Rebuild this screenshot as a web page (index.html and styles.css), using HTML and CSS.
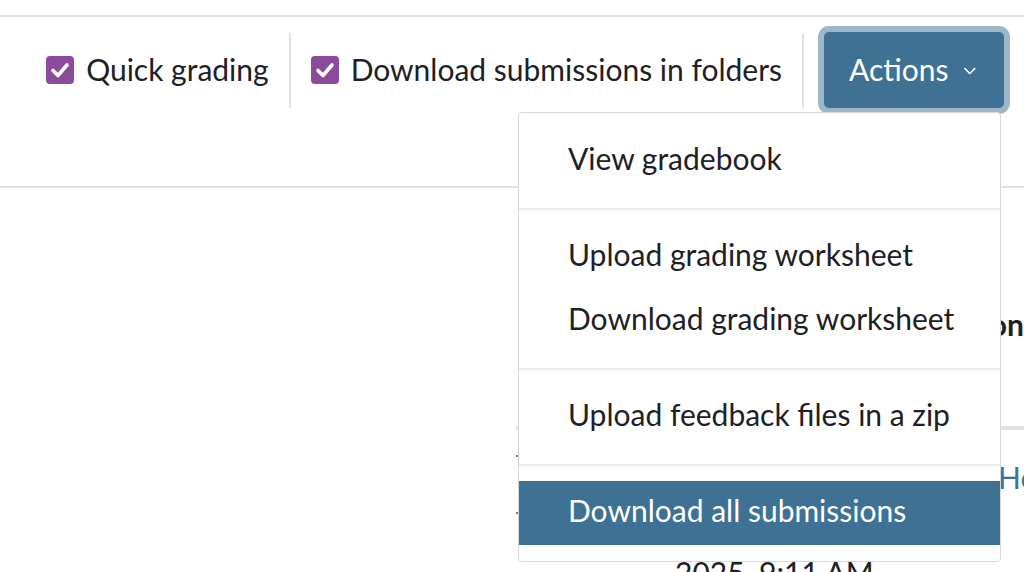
FILE: index.html
```html
<!DOCTYPE html>
<html lang="en">
<head>
<meta charset="utf-8">
<title>Submissions</title>
<link rel="stylesheet" href="styles.css">
</head>
<body>
<div class="page">
  <div class="topbar"></div>
  <div class="toolbar">
    <label class="check">
      <span class="box"><svg viewBox="0 0 28 28" width="28" height="28"><rect x="0" y="0" width="28" height="28" rx="4" fill="#8a4b9b"/><path d="M7 14.5 L12 19.5 L21 9" fill="none" stroke="#fff" stroke-width="3.6" stroke-linecap="round" stroke-linejoin="round"/></svg></span>
      <span class="lbl">Quick grading</span>
    </label>
    <span class="sep"></span>
    <label class="check">
      <span class="box"><svg viewBox="0 0 28 28" width="28" height="28"><rect x="0" y="0" width="28" height="28" rx="4" fill="#8a4b9b"/><path d="M7 14.5 L12 19.5 L21 9" fill="none" stroke="#fff" stroke-width="3.6" stroke-linecap="round" stroke-linejoin="round"/></svg></span>
      <span class="lbl">Download submissions in folders</span>
    </label>
    <span class="sep"></span>
    <div class="actions">
      <button class="btn" type="button"><span>Actions</span><svg class="chev" viewBox="0 0 14 8" width="14" height="8"><path d="M1 1 L7 7 L13 1" fill="none" stroke="#fff" stroke-width="2" stroke-linecap="round" stroke-linejoin="round"/></svg></button>
      <div class="menu">
        <a class="item">View gradebook</a>
        <div class="divider"></div>
        <a class="item">Upload grading worksheet</a>
        <a class="item">Download grading worksheet</a>
        <div class="divider"></div>
        <a class="item">Upload feedback files in a zip</a>
        <div class="divider"></div>
        <a class="item active">Download all submissions</a>
      </div>
    </div>
  </div>
  <div class="table">
    <div class="thead"><span class="th">Submission</span></div>
    <div class="tbody">
      <div class="marks"><span class="mark"></span><span class="mark mark2"></span></div>
      <div class="cells">
        <a class="link">Home</a>
        <div class="date">2025, 9:11 AM</div>
      </div>
    </div>
  </div>
</div>
</body>
</html>
```

FILE: styles.css
```css
html, body {
  margin: 0;
  padding: 0;
  background: #fff;
}
body {
  font-family: "Lato", "Noto Sans", sans-serif;
  font-size: 30px;
  color: #1d2125;
  overflow: hidden;
  width: 1024px;
  height: 572px;
}
.page {
  width: 1024px;
}
.topbar {
  height: 15px;
  border-bottom: 2px solid #dee2e6;
}
.toolbar {
  display: flex;
  justify-content: flex-end;
  align-items: center;
  gap: 20px;
  padding: 15px 20px 78px 0;
  border-bottom: 2px solid #dee2e6;
}
.check {
  display: flex;
  align-items: center;
  gap: 12px;
  white-space: nowrap;
}
.box {
  display: block;
  width: 28px;
  height: 28px;
}
.box svg {
  display: block;
}
.lbl {
  line-height: 36px;
  margin-top: -2px;
}
.sep {
  width: 2px;
  height: 75px;
  background: #dee2e6;
}
.actions {
  position: relative;
}
.btn {
  display: flex;
  align-items: center;
  gap: 16px;
  height: 76px;
  width: 180px;
  padding: 0 28px 0 25px;
  border: 0;
  border-radius: 5px;
  background: #3e7194;
  color: #fff;
  font-family: inherit;
  font-size: 30px;
  box-shadow: 0 0 0 6px #9db6c9;
  box-sizing: border-box;
}
.btn span {
  margin-top: -2px;
}
.chev {
  display: block;
  margin-top: 2px;
}
.menu {
  position: absolute;
  top: 80px;
  right: 3px;
  width: 483px;
  box-sizing: border-box;
  padding: 16px 0;
  background: #fff;
  border: 1px solid #d6d8da;
  border-radius: 4px;
  z-index: 5;
}
.item {
  display: block;
  height: 64px;
  box-sizing: border-box;
  padding: 11px 20px 0 49px;
  line-height: 36px;
  white-space: nowrap;
  color: #1d2125;
}
.item.active {
  background: #3e7194;
  color: #fff;
}
.divider {
  margin: 15px 0;
  border-top: 2px solid #e7eaed;
}
.table {
  margin-left: 516px;
  overflow: hidden;
  height: 400px;
}
.thead {
  display: flex;
  justify-content: flex-end;
  padding-top: 118px;
  height: 120px;
  border-bottom: 4px solid #dee2e6;
}
.th {
  font-weight: 700;
  line-height: 36px;
  white-space: nowrap;
}
.tbody {
  display: grid;
  grid-template-columns: 6px 1fr;
}
.marks {
  display: flex;
  flex-direction: column;
}
.mark {
  display: block;
  width: 4px;
  height: 2px;
  margin-top: 25px;
  background: #6c737a;
}
.mark2 {
  margin-top: 55px;
}
.cells {
  display: flex;
  flex-direction: column;
  overflow: hidden;
}
.link {
  margin-top: 29px;
  padding-left: 476px;
  line-height: 36px;
  color: #3e7194;
  white-space: nowrap;
}
.date {
  margin-top: 59px;
  padding-left: 153px;
  line-height: 36px;
  white-space: nowrap;
}
```
